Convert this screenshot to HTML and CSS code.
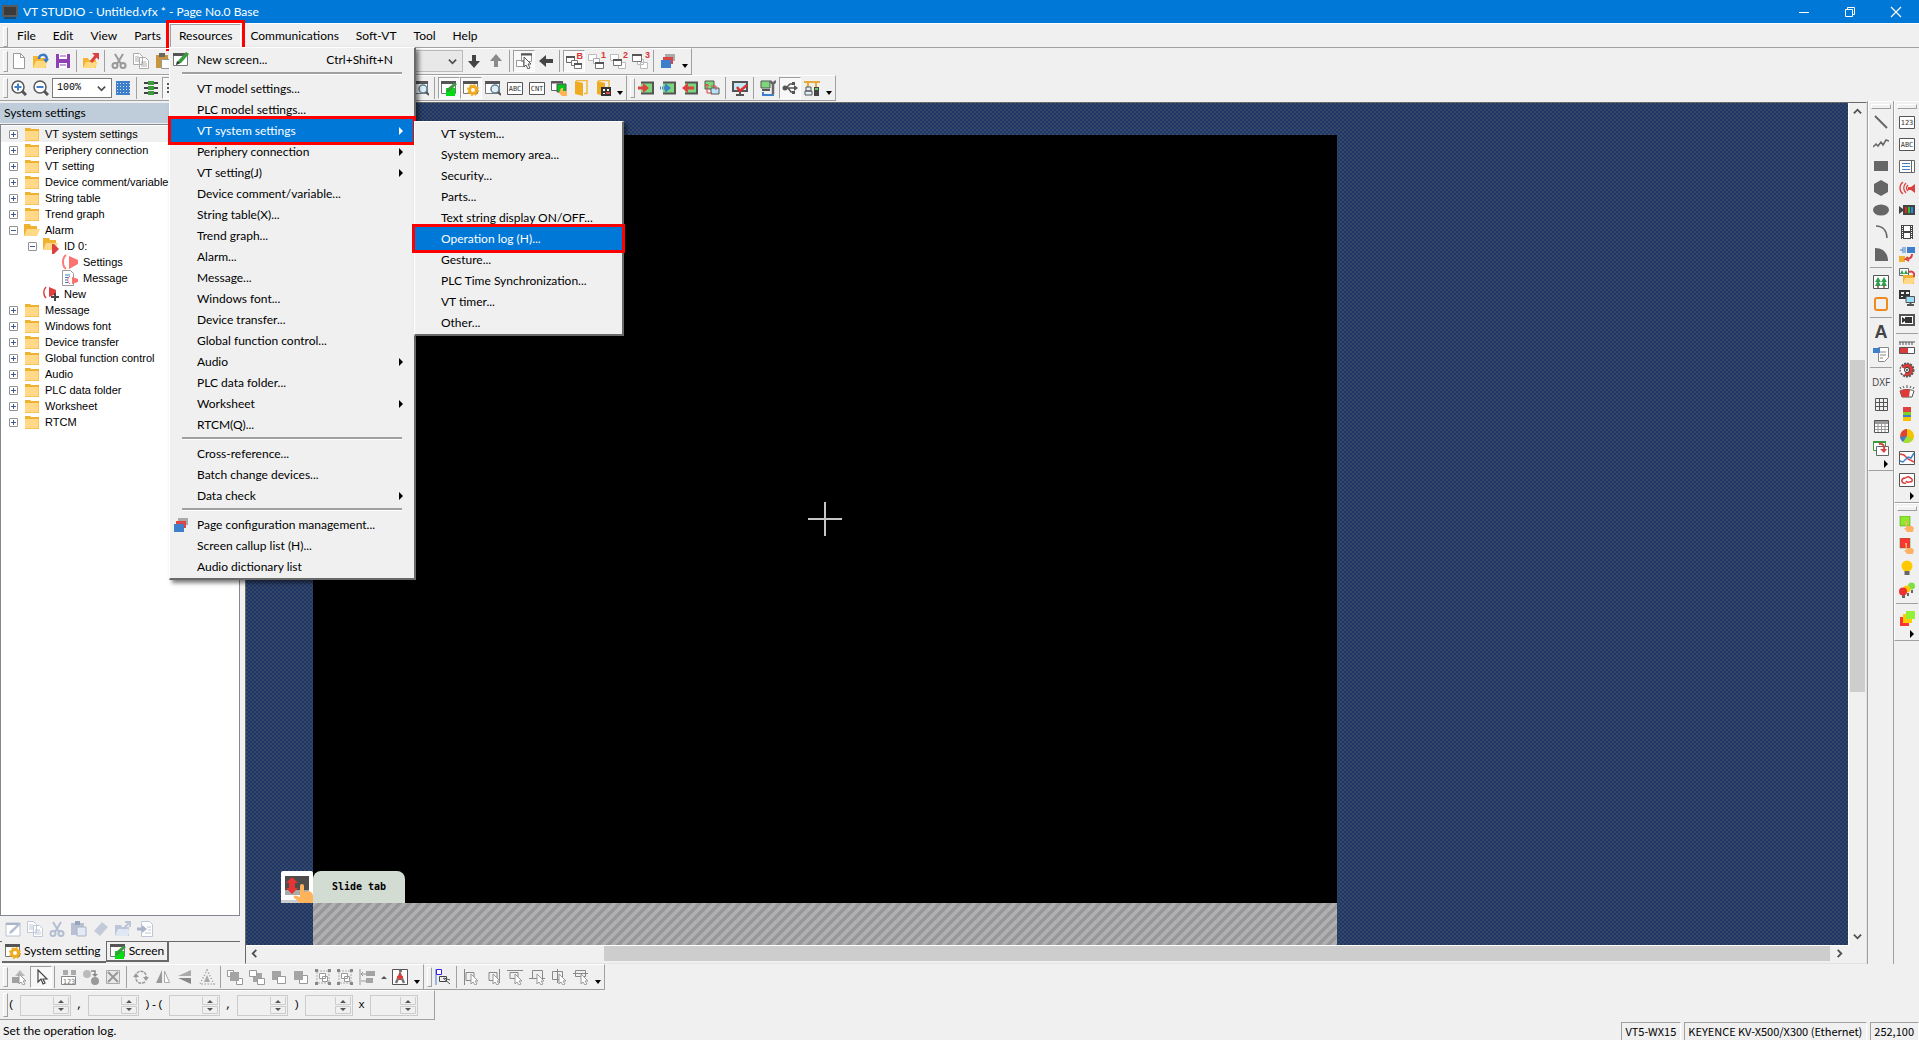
FILE: index.html
```html
<!DOCTYPE html>
<html lang="en">
<head>
<meta charset="utf-8">
<title>VT STUDIO - Untitled.vfx * - Page No.0 Base</title>
<link rel="stylesheet" href="styles.css">
</head>
<body>
<svg class="defs" aria-hidden="true">
  <symbol id="new" viewBox="0 0 16 16"><path d="M2.500.5h7l4 4v11h-11z" fill="#fff" stroke="#999"/><path d="M9.500.5v4h4" fill="none" stroke="#999"/></symbol>
  <symbol id="open" viewBox="0 0 16 16"><path d="M0 3h5l1 2h7v10H0z" fill="#f2b632"/><path d="M3 8h12l-3 7H0z" fill="#ffd980"/><path d="M6 6c0-5 7-6 8 0" fill="none" stroke="#3a7bc8" stroke-width="2.500"/><path d="M10 6h6l-3 4z" fill="#3a7bc8"/></symbol>
  <symbol id="save" viewBox="0 0 16 16"><path d="M1 1h14v14H1z" fill="#8e3fb5"/><path d="M4 1h8v5H4zM4 10h8v5H4z" fill="#fff"/><path d="M5 12h6M5 3h6" stroke="#8e3fb5"/></symbol>
  <symbol id="export" viewBox="0 0 16 16"><path d="M0 5h5l1 2h7v8H0z" fill="#f2b632"/><path d="M3 9h12l-3 6H0z" fill="#ffd980"/><path d="M8 9l5-6" stroke="#dd4040" stroke-width="3"/><path d="M9 0h7v7z" fill="#dd4040"/></symbol>
  <symbol id="cut" viewBox="0 0 16 16"><path d="M4 1l6 10M12 1L6 11" stroke="#999" stroke-width="2"/><circle cx="4" cy="12.500" r="2.500" fill="none" stroke="#999" stroke-width="2"/><circle cx="12" cy="12.500" r="2.500" fill="none" stroke="#999" stroke-width="2"/></symbol>
  <symbol id="copy" viewBox="0 0 16 16"><path d="M.5.5h6l3 3v8h-9zM6.500 4.500h6l3 3v8h-9z" fill="#fff" stroke="#aaa"/><path d="M2 4h4M2 6h4M2 8h4M8 9h5M8 11h6M8 13h6" stroke="#aaa"/></symbol>
  <symbol id="paste" viewBox="0 0 16 16"><path d="M1 2h12v13H1z" fill="#c8963c"/><path d="M4 0h6v4H4z" fill="#666"/><path d="M6.500 6.500h9v9h-9z" fill="#fff" stroke="#999"/></symbol>
  <symbol id="down" viewBox="0 0 16 16"><path d="M6 2h4v6h4l-6 7-6-7h4z" fill="#444"/></symbol>
  <symbol id="up" viewBox="0 0 16 16"><path d="M6 14h4V8h4L8 1 2 8h4z" fill="#8a8a8a"/></symbol>
  <symbol id="left" viewBox="0 0 16 16"><path d="M15 6v4H8v4L1 8l7-6v4z" fill="#444"/></symbol>
  <symbol id="pick" viewBox="0 0 16 16"><path d="M5.500.5h10v8h-10zM.5 7.500h7v6h-7z" fill="#fff" stroke="#999"/><path d="M5 1.500h11" stroke="#555" stroke-width="2"/><path d="M8 4v10l2-2 2 4 2-1-2-4h3z" fill="#fff" stroke="#555"/></symbol>
  <symbol id="win" viewBox="0 0 16 16"><path d="M.5 3.500h8v6h-8z" fill="#fff" stroke="#666"/><path d="M5.500 7.500h6v5h-6z" fill="#fff" stroke="#777"/><path d="M8.500 10.500h7v5h-7z" fill="#fff" stroke="#777"/><path d="M0 4h9M8 11h8" stroke="#555" stroke-width="2"/></symbol>
  <symbol id="win1" viewBox="0 0 16 16"><path d="M.5 1.500h8v6h-8z" fill="#fff" stroke="#bbb"/><path d="M5.500 5.500h6v5h-6z" fill="#fff" stroke="#aaa"/><path d="M7.500 9.500h8v6h-8z" fill="#fff" stroke="#777"/><path d="M7 10h9" stroke="#555" stroke-width="2"/></symbol>
  <symbol id="win2" viewBox="0 0 16 16"><path d="M.5 1.500h8v6h-8z" fill="#fff" stroke="#bbb"/><path d="M8.500 9.500h7v6h-7z" fill="#fff" stroke="#bbb"/><path d="M3.500 6.500h8v6h-8z" fill="#fff" stroke="#777"/><path d="M3 7h9" stroke="#555" stroke-width="2"/></symbol>
  <symbol id="win3" viewBox="0 0 16 16"><path d="M8.500 9.500h7v6h-7zM5.500 6.500h6v5h-6z" fill="#fff" stroke="#bbb"/><path d="M.5 1.500h9v7h-9z" fill="#fff" stroke="#777"/><path d="M0 2h10" stroke="#555" stroke-width="2"/></symbol>
  <symbol id="pages" viewBox="0 0 16 16"><path d="M5 1h10v7H5z" fill="#aaa"/><path d="M3 4h10v7H3z" fill="#dd4444"/><path d="M1 7h10v8H1z" fill="#3d7fcb"/></symbol>
  <symbol id="zin" viewBox="0 0 16 16"><path d="M11 11l4 4" stroke="#555" stroke-width="3"/><circle cx="7" cy="7" r="6" fill="#fff" stroke="#555" stroke-width="1.500"/><path d="M3.500 7h7M7 3.500v7" stroke="#3d7fcb" stroke-width="2"/></symbol>
  <symbol id="zout" viewBox="0 0 16 16"><path d="M11 11l4 4" stroke="#555" stroke-width="3"/><circle cx="7" cy="7" r="6" fill="#fff" stroke="#555" stroke-width="1.500"/><path d="M3.500 7h7" stroke="#3d7fcb" stroke-width="2"/></symbol>
  <symbol id="grid" viewBox="0 0 16 16"><path d="M1 1h14v14H1z" fill="#3d7fcb"/><path d="M2 3.500h13M2 6.500h13M2 9.500h13M2 12.500h13" stroke="#cfe2f7" stroke-dasharray="1 2"/></symbol>
  <symbol id="align" viewBox="0 0 16 16"><path d="M5 1h6v4H5zM5 6h6v4H5zM5 11h6v4H5z" fill="#3c9a3c"/><path d="M1 3h4M11 3h4M1 8h4M11 8h4M1 13h4M11 13h4" stroke="#444" stroke-width="2"/></symbol>
  <symbol id="dots" viewBox="0 0 16 16"><path d="M2 4h2M2 8h2M2 12h2" stroke="#555" stroke-width="2"/></symbol>
  <symbol id="frame" viewBox="0 0 16 16"><path d="M.5 1.500h14v12H.5z" fill="#fff" stroke="#777"/><path d="M0 2.500h15" stroke="#555" stroke-width="3"/></symbol>
  <symbol id="find" viewBox="0 0 16 16"><use href="#frame"/><circle cx="10" cy="9" r="4" fill="#dff0f7" stroke="#5f8096" stroke-width="1.500"/><path d="M13 12l3 3" stroke="#555" stroke-width="2"/></symbol>
  <symbol id="edit" viewBox="0 0 16 16"><use href="#frame"/><path d="M5 8h9v8H5z" fill="#00dd10"/><path d="M5 12l1-3 7-6 3 1-8 8z" fill="#3a9b3f"/></symbol>
  <symbol id="pencil" viewBox="0 0 16 16"><use href="#frame"/><path d="M3 13l2-4L13 0l3 2-8 9z" fill="#3a9b3f"/><path d="M3 13l1-4 3 2z" fill="#333"/></symbol>
  <symbol id="gear" viewBox="0 0 16 16"><use href="#frame"/><circle cx="10" cy="10" r="3.500" fill="#fff" stroke="#f0ac20" stroke-width="3"/><circle cx="10" cy="10" r="5.300" fill="none" stroke="#f0ac20" stroke-width="1.500" stroke-dasharray="2 2.160"/></symbol>
  <symbol id="box" viewBox="0 0 16 16"><path d="M.5 2.500h15v12H.5z" fill="#fff" stroke="#555"/></symbol>
  <symbol id="touch" viewBox="0 0 16 16"><path d="M.5 1.500h11v9H.5z" fill="#fff" stroke="#666"/><path d="M0 2.500h12" stroke="#555" stroke-width="2"/><path d="M6 4h9v8H6z" fill="#00c818" stroke="#555"/><path d="M10 8h2v3h4v5h-5l-3-3z" fill="#ffb256"/></symbol>
  <symbol id="book" viewBox="0 0 16 16"><path d="M2 1l8 2v13l-8-2z" fill="#f0ac20"/><path d="M3 .5h11v13h-3" fill="none" stroke="#f0b840" stroke-width="1.500"/></symbol>
  <symbol id="books" viewBox="0 0 16 16"><use href="#book"/><path d="M6 7h10v9H6z" fill="#333"/><path d="M8 9h2v2H8zM12 9h2v2h-2zM8 13h2v1H8z" fill="#fff"/><path d="M11 12h4v2h-4z" fill="#d44"/></symbol>
  <symbol id="card" viewBox="0 0 16 16"><path d="M3 2.500h12v11H3" fill="#7cd67c" stroke="#555" stroke-width="2"/></symbol>
  <symbol id="cin" viewBox="0 0 16 16"><use href="#card"/><path d="M0 8h7" stroke="#dd4040" stroke-width="3"/><path d="M5 3l6 5-6 5z" fill="#dd4040"/></symbol>
  <symbol id="cin2" viewBox="0 0 16 16"><use href="#card"/><path d="M0 8h7" stroke="#3d7fcb" stroke-width="3" stroke-dasharray="1 1"/><path d="M5 3l6 5-6 5z" fill="#3d7fcb"/></symbol>
  <symbol id="cout" viewBox="0 0 16 16"><use href="#card"/><path d="M4 8h8" stroke="#dd4040" stroke-width="3"/><path d="M6 3L0 8l6 5z" fill="#dd4040"/></symbol>
  <symbol id="swap" viewBox="0 0 16 16"><path d="M1 1h9v8H1z" fill="#7cd67c" stroke="#555"/><path d="M7 8h8v6H7z" fill="#b4e4fa" stroke="#555"/><path d="M3 4v9h5M1 6l2-2 2 2M7 6h5v4" fill="none" stroke="#dd4040"/></symbol>
  <symbol id="moncheck" viewBox="0 0 16 16"><path d="M1 2h14v9H1z" fill="#c3e8f8" stroke="#555" stroke-width="2"/><path d="M4 15h8M8 11v4" stroke="#555" stroke-width="2"/><path d="M5 7l3 4 7-6" fill="none" stroke="#dd3030" stroke-width="2.500"/></symbol>
  <symbol id="tools" viewBox="0 0 16 16"><path d="M1 1h9v7H1z" fill="#7cd67c" stroke="#555"/><path d="M2 10h8" stroke="#555" stroke-width="2"/><path d="M3 12v3h11" fill="none" stroke="#3d7fcb" stroke-width="2"/><path d="M10 1l3 3 3-3M13 4v10" fill="none" stroke="#666" stroke-width="2.500"/></symbol>
  <symbol id="usb" viewBox="0 0 16 16"><path d="M1 8h13M4 8l4-4h3M6 8l3 4h3" fill="none" stroke="#555" stroke-width="1.500"/><circle cx="3" cy="8" r="2.500" fill="#555"/><path d="M12 5l4 3-4 3zM10 2h3v3h-3zM10 11h3v3h-3z" fill="#555"/></symbol>
  <symbol id="net" viewBox="0 0 16 16"><path d="M0 2h16M4 2v5M12 2v5" stroke="#e6a93a" stroke-width="2"/><path d="M2 7h5v4H2zM1 11h7v4H1z" fill="#dff0f7" stroke="#555"/><path d="M10 7h5v9h-5z" fill="#444"/><path d="M11 8h3v2h-3z" fill="#6c6"/></symbol>
  <symbol id="drop" viewBox="0 0 8 16"><path d="M1 11h6l-3 4z" fill="#000"/></symbol>
  <symbol id="side" viewBox="0 0 8 8"><path d="M2 0v8l4-4z" fill="currentColor"/></symbol>
  <symbol id="folder" viewBox="0 0 16 16"><path d="M1 2h5l1 1h8v12H1z" fill="#f0b030"/><path d="M1 5h13.500v9.500H1z" fill="#ffd987"/></symbol>
  <symbol id="fopen" viewBox="0 0 16 16"><path d="M0 2h6l1 2h6v10H0z" fill="#f0b030"/><path d="M3 7h13l-3 7H0z" fill="#ffd987"/></symbol>
  <symbol id="fid" viewBox="0 0 16 16"><path d="M0 0h6l1 2h6v10H0z" fill="#f0b030"/><path d="M3 5h12l-3 7H0z" fill="#ffd987"/><path d="M9 6h2l5 5-5 5H9z" fill="#dd4040"/></symbol>
  <symbol id="alarm" viewBox="0 0 16 16"><path d="M4 1C0 4 0 12 4 15" fill="none" stroke="#fa7a7a" stroke-width="2"/><path d="M7 2l9 4v4l-9 5z" fill="#fa7272"/></symbol>
  <symbol id="amsg" viewBox="0 0 16 16"><path d="M.5.5h8l3 3v12H.5z" fill="#fff" stroke="#999"/><path d="M3 5h5M3 7.500h4M3 10h3M3 12.500h3" stroke="#3d7fcb"/><path d="M8 6c-3 2-3 6 0 8" fill="none" stroke="#fa7272"/><path d="M10 7l6 2v3l-6 2z" fill="#fa7272"/></symbol>
  <symbol id="anew" viewBox="0 0 16 16"><path d="M3 1C0 4 0 9 3 12" fill="none" stroke="#dd4040" stroke-width="1.500"/><path d="M6 1l7 3v4l-7 3z" fill="#dd4040"/><path d="M12 7v8M8 11h8" stroke="#444" stroke-width="2"/></symbol>
  <symbol id="slash" viewBox="0 0 16 16"><path d="M2 2l12 12" stroke="#666" stroke-width="2"/></symbol>
  <symbol id="poly" viewBox="0 0 16 16"><path d="M0 11l3-3 2 2 3-4 2 3 3-5 3 1" fill="none" stroke="#666" stroke-width="1.500"/></symbol>
  <symbol id="rect" viewBox="0 0 16 16"><path d="M1 3h14v10H1z" fill="#666"/></symbol>
  <symbol id="hex" viewBox="0 0 16 16"><path d="M8 0l7 4v8l-7 4-7-4V4z" fill="#666"/></symbol>
  <symbol id="ell" viewBox="0 0 16 16"><ellipse cx="8" cy="8" rx="8" ry="5.500" fill="#666"/></symbol>
  <symbol id="arc" viewBox="0 0 16 16"><path d="M3 2c7 0 11 5 11 12" fill="none" stroke="#666" stroke-width="1.500"/></symbol>
  <symbol id="pie4" viewBox="0 0 16 16"><path d="M2 2c8 0 13 5 13 13H2z" fill="#666"/></symbol>
  <symbol id="img" viewBox="0 0 16 16"><path d="M.5 1.500h15v13H.5z" fill="#fff" stroke="#555"/><path d="M5 3l3 5H2zM11 3l3 5H8zM5 6l3 6H2zM11 6l3 6H8z" fill="#2f9e4f"/><path d="M5 11v3M11 11v3" stroke="#855" stroke-width="1.500"/></symbol>
  <symbol id="ring" viewBox="0 0 16 16"><rect x="2" y="2" width="12" height="12" rx="2" fill="none" stroke="#f08a1c" stroke-width="2"/></symbol>
  <symbol id="note" viewBox="0 0 16 16"><path d="M5.500 1.500h10v10l-4 4h-6z" fill="#fff" stroke="#888"/><path d="M0 2h7v5H0z" fill="#3d7fcb"/><path d="M7 6h6M7 9h6M7 12h3" stroke="#888"/></symbol>
  <symbol id="tbl" viewBox="0 0 16 16"><path d="M2.500 2.500h12v12h-12zM2.500 6.500h12M2.500 10.500h12M6.500 2.500v12M10.500 2.500v12" fill="none" stroke="#555"/></symbol>
  <symbol id="tbl2" viewBox="0 0 16 16"><path d="M1.500 2.500h14v12h-14z" fill="#fff" stroke="#555"/><path d="M2 3h13v2H2z" fill="#999"/><path d="M2 5.500h13M2 8.500h13M2 11.500h13M5 3v11M8.500 3v11M12 3v11" stroke="#999"/></symbol>
  <symbol id="ret" viewBox="0 0 16 16"><path d="M.5 1.500h12v9H.5z" fill="#fff" stroke="#3c9a3c"/><path d="M0 2h13" stroke="#3c9a3c" stroke-width="2"/><path d="M3.500 6.500h12v9h-12z" fill="#fff" stroke="#666"/><path d="M6 4c4-1 6 2 5 6" fill="none" stroke="#dd4040" stroke-width="2"/><path d="M7 9h7l-3 4z" fill="#dd4040"/></symbol>
  <symbol id="list" viewBox="0 0 16 16"><path d="M.5 2.500h15v12H.5zM12.500 2.500v12" fill="#fff" stroke="#666"/><path d="M3 5.500h8M3 8.500h8M3 11.500h8" stroke="#3d7fcb"/></symbol>
  <symbol id="horn" viewBox="0 0 16 16"><path d="M4 2c-4 3-4 9 0 12M7 3c-3 3-3 7 0 10M9 5c-2 2-2 4 0 6" fill="none" stroke="#dd4040" stroke-width="1.300"/><path d="M9 7h3l4-3v9l-4-3H9z" fill="#dd4040"/></symbol>
  <symbol id="cam" viewBox="0 0 16 16"><path d="M0 4l4 3V3h12v10H4V9l-4 3z" fill="#444"/><path d="M6 5h2v6H6z" fill="#e22"/><path d="M9 5h2v6H9z" fill="#2c2"/><path d="M12 5h2v6h-2z" fill="#28e"/></symbol>
  <symbol id="film" viewBox="0 0 16 16"><path d="M2 1h12v14H2z" fill="#444"/><path d="M5 2h6v5H5zM5 9h6v5H5z" fill="#fff"/><path d="M3.500 2v13M12.500 2v13" stroke="#fff" stroke-dasharray="1 1"/></symbol>
  <symbol id="link" viewBox="0 0 16 16"><path d="M8 1h8v6H8z" fill="#3d7fcb"/><path d="M1 4h3M4 1v6M6 1v6" stroke="#3d7fcb"/><path d="M0 10h6v6H0z" fill="#f0b030"/><path d="M13 8c0 4-3 5-6 5l2-2M7 13l3 2" fill="none" stroke="#dd4040" stroke-width="2"/></symbol>
  <symbol id="imgf" viewBox="0 0 16 16"><path d="M.5.5h9v7h-9z" fill="#fff" stroke="#666"/><path d="M3 2l2 4H1zM7 2l2 4H5z" fill="#2f9e4f"/><path d="M4 7h11v9H4z" fill="#f0b030"/><path d="M6 10h10l-2 6H4z" fill="#ffd987"/><path d="M10 4c4-2 6 2 5 5" fill="none" stroke="#dd4040" stroke-width="2"/></symbol>
  <symbol id="vnc" viewBox="0 0 16 16"><path d="M0 0h11v9H0z" fill="#333"/><path d="M2 2h3v2H2zM7 2h3v2H7zM2 6h2v1H2z" fill="#eee"/><path d="M7 6.500h8.500v6H7z" fill="#9bdcf7" stroke="#555"/><path d="M8 15h7M11.500 12v3" stroke="#555" stroke-width="2"/></symbol>
  <symbol id="camm" viewBox="0 0 16 16"><path d="M0 2h16v12H0z" fill="#555"/><path d="M2 4h12v8H2z" fill="#fff"/><path d="M3 5l3 2V5h7v6H6V9l-3 2z" fill="#333"/></symbol>
  <symbol id="meter" viewBox="0 0 16 16"><path d="M0 2h16M1 2v3M4 2v3M7 2v3M10 2v3M13 2v3" stroke="#555"/><path d="M.5 7.500h15v6H.5z" fill="#fff" stroke="#555"/><path d="M1 8h8v5H1z" fill="#dd3a3a"/></symbol>
  <symbol id="dial" viewBox="0 0 16 16"><circle cx="8" cy="8" r="6.500" fill="#dd3a3a" stroke="#555" stroke-width="2" stroke-dasharray="2 1"/><path d="M8 8L2 5l-.5 5L5 13z" fill="#fff"/><circle cx="8" cy="8" r="2.500" fill="#fff" stroke="#333"/><circle cx="8" cy="8" r="1" fill="#333"/></symbol>
  <symbol id="fan" viewBox="0 0 16 16"><path d="M1 7c4-2 10-2 14 0l-2 6H3z" fill="#fff" stroke="#555"/><path d="M1 7c4-2 7-2 10-1l-1 7H3z" fill="#dd3a3a"/><path d="M1 3l1 2M4 2l1 2M8 1v3M12 2l-1 2M15 3l-1 2" stroke="#555"/></symbol>
  <symbol id="bar" viewBox="0 0 16 16"><path d="M4 1h8v5H4z" fill="#e04040"/><path d="M4 6h8v3H4z" fill="#7ed321"/><path d="M4 9h8v2H4z" fill="#3d7fcb"/><path d="M4 11h8v4H4z" fill="#f5c400"/></symbol>
  <symbol id="pie" viewBox="0 0 16 16"><circle cx="8" cy="8" r="7" fill="#f5c400"/><path d="M8 8V1a7 7 0 0 0-6 10z" fill="#e04040"/><path d="M8 8l6 3a7 7 0 0 1-10 3z" fill="#a0e030"/><path d="M8 8l-4 6a7 7 0 0 1-3-5z" fill="#3d7fcb"/></symbol>
  <symbol id="trend" viewBox="0 0 16 16"><path d="M.5 1.500h15v13H.5z" fill="#fff" stroke="#555"/><path d="M1 4l4 1 4 4 6 3" fill="none" stroke="#dd4040" stroke-width="1.500"/><path d="M1 11l3 1 5-5 3 1 3-5" fill="none" stroke="#3d7fcb" stroke-width="1.500"/></symbol>
  <symbol id="xy" viewBox="0 0 16 16"><path d="M.5 1.500h15v13H.5z" fill="#fff" stroke="#555"/><path d="M7 11c-4 1-6-3-2-5 1 1 3-2 5-1s5 3 2 5c-2-1-3 2-5-1" fill="none" stroke="#dd4040" stroke-width="1.500"/></symbol>
  <symbol id="sw" viewBox="0 0 16 16"><path d="M1 0h10v10H1z" fill="currentColor" stroke="#4a8a20" stroke-width=".5"/><path d="M6 5h2v5h5l2 2-1 4H8l-3-4h2z" fill="#ffb266"/></symbol>
  <symbol id="bulb" viewBox="0 0 16 16"><circle cx="8" cy="6" r="5.500" fill="#ffc800"/><path d="M5.500 11h5v4h-5z" fill="#666"/></symbol>
  <symbol id="bulbs" viewBox="0 0 16 16"><path d="M3 13h3v3H3zM8 11h2v3H8zM12 8h2v3h-2z" fill="#666"/><circle cx="12.500" cy="4" r="3.500" fill="#7de04a"/><circle cx="8" cy="7" r="3.500" fill="#ffc800"/><circle cx="4" cy="9.500" r="4" fill="#ee3030"/></symbol>
  <symbol id="stack" viewBox="0 0 16 16"><path d="M1 7h9v9H1z" fill="#f33"/><path d="M4 4h9v9H4z" fill="#fc0"/><path d="M7 1h9v8H7z" fill="#93f035"/></symbol>
  <symbol id="gsel" viewBox="0 0 16 16"><path d="M9 1l5 6H4z" fill="#bbb"/><path d="M1 8h7v6H1z" fill="#a0a0a0"/><path d="M8 5v10l2-2 2 3 2-1-2-3h3z" fill="#fff" stroke="#999"/></symbol>
  <symbol id="arrow" viewBox="0 0 16 16"><path d="M5 1v12l3-3 2 5 2-1-2-4h4z" fill="#fff" stroke="#444" stroke-width="1.200"/></symbol>
  <symbol id="g123" viewBox="0 0 16 16"><path d="M2 1h5v5H2zM10 1h5v5h-5z" fill="#aaa"/><path d="M.5 7.500h14v8H.5z" fill="#fff" stroke="#888"/></symbol>
  <symbol id="gmove" viewBox="0 0 16 16"><circle cx="4" cy="5" r="4" fill="#bbb"/><circle cx="12" cy="12" r="4" fill="#999"/><path d="M8 2h4v5" fill="none" stroke="#888" stroke-width="1.500"/><path d="M9 5h6l-3 3z" fill="#888"/></symbol>
  <symbol id="gx" viewBox="0 0 16 16"><path d="M1.500 1.500h13v13h-13z" fill="#e8e8e8" stroke="#aaa"/><path d="M3 3l10 10M13 3L3 13" stroke="#999" stroke-width="2"/></symbol>
  <symbol id="grot" viewBox="0 0 16 16"><path d="M4 4c4-4 10-1 9 5M12 13c-5 3-10 0-9-6" fill="none" stroke="#999" stroke-width="1.500" stroke-dasharray="3 1"/><path d="M10 8h6l-3 4zM0 8h6L3 4z" fill="#999"/></symbol>
  <symbol id="gfh" viewBox="0 0 16 16"><path d="M7 1v13H1z" fill="#999"/><path d="M9.500 2v11.500h5z" fill="#fff" stroke="#aaa"/></symbol>
  <symbol id="gfv" viewBox="0 0 16 16"><path d="M14 7H1l13-6z" fill="#aaa"/><path d="M14 9H1l13 6z" fill="#888"/></symbol>
  <symbol id="gtri" viewBox="0 0 16 16"><path d="M8 1l7 14H1z" fill="none" stroke="#999" stroke-width="1.500" stroke-dasharray="1 2"/><path d="M8 6l3 7H5z" fill="#aaa"/></symbol>
  <symbol id="z1" viewBox="0 0 16 16"><path d="M.5 1.500h6v6h-6zM9.500 9.500h6v6h-6z" fill="#fff" stroke="#999"/><path d="M3 3h9v9H3z" fill="#a4a4a4"/></symbol>
  <symbol id="z2" viewBox="0 0 16 16"><path d="M4 4h9v9H4z" fill="#a4a4a4"/><path d="M.5 1.500h7v6h-7zM8.500 9.500h7v6h-7z" fill="#fff" stroke="#999"/></symbol>
  <symbol id="z3" viewBox="0 0 16 16"><path d="M1 2h9v9H1z" fill="#a4a4a4"/><path d="M6.500 7.500h8v7h-8z" fill="#fff" stroke="#999"/></symbol>
  <symbol id="z4" viewBox="0 0 16 16"><path d="M6.500 6.500h8v8h-8z" fill="#fff" stroke="#999"/><path d="M1 2h9v9H1z" fill="#a4a4a4"/></symbol>
  <symbol id="grp" viewBox="0 0 16 16"><path d="M2 2h12v12H2z" fill="none" stroke="#aaa" stroke-dasharray="2 1"/><path d="M0 0h3v3H0zM13 0h3v3h-3zM0 13h3v3H0zM13 13h3v3h-3z" fill="#888"/><path d="M4.500 4.500h6v5h-6zM7.500 7.500h5v5h-5z" fill="#fff" stroke="#999"/></symbol>
  <symbol id="dist" viewBox="0 0 16 16"><path d="M1 0v16M2 5h5M2 12h5M4 3L2 5l2 2" fill="none" stroke="#999"/><path d="M7 2h9v5H7zM7 9h7v5H7z" fill="#a4a4a4"/></symbol>
  <symbol id="snap" viewBox="0 0 16 16"><path d="M.5.5h15v15H.5z" fill="#fff" stroke="#555"/><path d="M4 14l4-9 4 9M7 2h3" fill="none" stroke="#777" stroke-width="2.500"/><path d="M8 4v7M5 8h6" stroke="#e33" stroke-width="2"/></symbol>
  <symbol id="anc" viewBox="0 0 16 16"><path d="M1 0v16" stroke="#3d7fcb"/><path d="M1.500.5h5v5h-5z" fill="#fff" stroke="#3a1fe0"/><path d="M4.500 7.500h7v5h-7z" fill="none" stroke="#444"/><path d="M8 9l7 6M9 9l6 2" stroke="#555"/></symbol>
  <symbol id="ptr" viewBox="0 0 16 16"><path d="M8 5v10l2-2 2 3 2-1-2-3h3z" fill="#fff" stroke="#999"/></symbol>
  <symbol id="spn" viewBox="0 0 16 17"><path d="M.5 0v7.500h15V0M.5 9.500h15v7H.5z" fill="none" stroke="#ccc"/><path d="M5 6h6L8 3zM5 11h6l-3 3z" fill="#555"/></symbol>
  <symbol id="eraser" viewBox="0 0 16 16"><path d="M9 1l6 5-8 9-6-5z" fill="#c3cad9"/></symbol>
  <symbol id="up4" viewBox="0 0 8 8"><path d="M1 6l3-3 3 3z" fill="#555"/></symbol>
  <symbol id="chev" viewBox="0 0 10 10"><path d="M1 3l4 4 4-4" fill="none" stroke="currentColor" stroke-width="2"/></symbol>
</svg>

<header class="title">
  <svg class="app" viewBox="0 0 16 14"><path d="M0 0h16v12H0z" fill="#5a5a5a"/><path d="M2 2h12v8H2z" fill="#3a3a3a"/><path d="M2 13h12" stroke="#222"/></svg>
  <h1>VT STUDIO - Untitled.vfx * - Page No.0 Base</h1>
  <div class="winbtns">
    <button aria-label="Minimize"><svg viewBox="0 0 12 12"><path d="M1 6.500h10" stroke="#fff"/></svg></button>
    <button aria-label="Restore"><svg viewBox="0 0 12 12"><path d="M1.500 3.500h7v7h-7zM3.500 3V1.500h7v7H9" fill="none" stroke="#fff"/></svg></button>
    <button aria-label="Close"><svg viewBox="0 0 12 12"><path d="M1 1l10 10M11 1L1 11" stroke="#fff" stroke-width="1.200"/></svg></button>
  </div>
</header>

<nav class="menubar">
  <button>File</button><button>Edit</button><button>View</button><button>Parts</button>
  <div class="menuhost">
    <button class="open marked">Resources</button>
    <ul class="popup main">
      <li><button><svg class="i"><use href="#pencil"/></svg>New screen...<kbd>Ctrl+Shift+N</kbd></button></li>
      <li class="rule"></li>
      <li><button>VT model settings...</button></li>
      <li><button>PLC model settings...</button></li>
      <li class="active marked"><button>VT system settings<svg class="more"><use href="#side"/></svg></button>
        <ul class="popup sub">
          <li><button>VT system...</button></li>
          <li><button>System memory area...</button></li>
          <li><button>Security...</button></li>
          <li><button>Parts...</button></li>
          <li><button>Text string display ON/OFF...</button></li>
          <li class="active marked"><button>Operation log (H)...</button></li>
          <li><button>Gesture...</button></li>
          <li><button>PLC Time Synchronization...</button></li>
          <li><button>VT timer...</button></li>
          <li><button>Other...</button></li>
        </ul>
      </li>
      <li><button>Periphery connection<svg class="more"><use href="#side"/></svg></button></li>
      <li><button>VT setting(J)<svg class="more"><use href="#side"/></svg></button></li>
      <li><button>Device comment/variable...</button></li>
      <li><button>String table(X)...</button></li>
      <li><button>Trend graph...</button></li>
      <li><button>Alarm...</button></li>
      <li><button>Message...</button></li>
      <li><button>Windows font...</button></li>
      <li><button>Device transfer...</button></li>
      <li><button>Global function control...</button></li>
      <li><button>Audio<svg class="more"><use href="#side"/></svg></button></li>
      <li><button>PLC data folder...</button></li>
      <li><button>Worksheet<svg class="more"><use href="#side"/></svg></button></li>
      <li><button>RTCM(Q)...</button></li>
      <li class="rule"></li>
      <li><button>Cross-reference...</button></li>
      <li><button>Batch change devices...</button></li>
      <li><button>Data check<svg class="more"><use href="#side"/></svg></button></li>
      <li class="rule"></li>
      <li><button><svg class="i"><use href="#pages"/></svg>Page configuration management...</button></li>
      <li><button>Screen callup list (H)...</button></li>
      <li><button>Audio dictionary list</button></li>
    </ul>
  </div>
  <button>Communications</button><button>Soft-VT</button><button>Tool</button><button>Help</button>
</nav>

<div class="bars">
  <div class="bar first">
    <button class="t" aria-label="New"><svg class="i"><use href="#new"/></svg></button>
    <button class="t" aria-label="Open"><svg class="i"><use href="#open"/></svg></button>
    <button class="t" aria-label="Save"><svg class="i"><use href="#save"/></svg></button>
    <i class="sep"></i>
    <button class="t" aria-label="Export"><svg class="i"><use href="#export"/></svg></button>
    <i class="sep"></i>
    <button class="t" aria-label="Cut"><svg class="i"><use href="#cut"/></svg></button>
    <button class="t" aria-label="Copy"><svg class="i"><use href="#copy"/></svg></button>
    <button class="t" aria-label="Paste"><svg class="i"><use href="#paste"/></svg></button>
    <span class="combo page"><select aria-label="Screen" disabled><option></option></select><svg class="chev"><use href="#chev"/></svg></span>
    <button class="t" aria-label="Next"><svg class="i"><use href="#down"/></svg></button>
    <button class="t" aria-label="Previous"><svg class="i"><use href="#up"/></svg></button>
    <i class="sep"></i>
    <button class="t on" aria-label="Pick"><svg class="i"><use href="#pick"/></svg></button>
    <button class="t" aria-label="Back"><svg class="i"><use href="#left"/></svg></button>
    <i class="sep"></i>
    <button class="t on"><svg class="i"><use href="#win"/></svg><b class="tag">B</b></button>
    <button class="t"><svg class="i"><use href="#win1"/></svg><b class="tag">1</b></button>
    <button class="t"><svg class="i"><use href="#win2"/></svg><b class="tag">2</b></button>
    <button class="t"><svg class="i"><use href="#win3"/></svg><b class="tag">3</b></button>
    <i class="sep"></i>
    <button class="t" aria-label="Pages"><svg class="i"><use href="#pages"/></svg></button>
    <button class="d" aria-label="More"><svg><use href="#drop"/></svg></button>
  </div>
</div>
<div class="bars">
  <div class="bar second">
    <button class="t" aria-label="Zoom in"><svg class="i"><use href="#zin"/></svg></button>
    <button class="t" aria-label="Zoom out"><svg class="i"><use href="#zout"/></svg></button>
    <span class="combo zoom"><select aria-label="Zoom"><option>100%</option></select><svg class="chev"><use href="#chev"/></svg></span>
    <button class="t" aria-label="Grid"><svg class="i"><use href="#grid"/></svg></button>
    <i class="sep"></i>
    <button class="t" aria-label="Align"><svg class="i"><use href="#align"/></svg></button>
    <button class="t on" aria-label="Dots"><svg class="i"><use href="#dots"/></svg></button>
    <span class="gap"></span>
    <button class="t" aria-label="Search"><svg class="i"><use href="#find"/></svg></button>
    <i class="sep"></i>
    <button class="t on" aria-label="Edit"><svg class="i"><use href="#edit"/></svg></button>
    <button class="t on" aria-label="Settings"><svg class="i"><use href="#gear"/></svg></button>
    <button class="t" aria-label="Find"><svg class="i"><use href="#find"/></svg></button>
    <button class="t"><svg class="i"><use href="#box"/></svg><b class="abc">ABC</b></button>
    <button class="t"><svg class="i"><use href="#box"/></svg><b class="abc">CNT</b></button>
    <button class="t" aria-label="Touch"><svg class="i"><use href="#touch"/></svg></button>
    <button class="t" aria-label="Library"><svg class="i"><use href="#book"/></svg></button>
    <button class="t" aria-label="Parts library"><svg class="i"><use href="#books"/></svg></button>
    <button class="d" aria-label="More"><svg><use href="#drop"/></svg></button>
  </div>
  <div class="bar">
    <button class="t" aria-label="Send"><svg class="i"><use href="#cin"/></svg></button>
    <button class="t" aria-label="Send partly"><svg class="i"><use href="#cin2"/></svg></button>
    <button class="t" aria-label="Receive"><svg class="i"><use href="#cout"/></svg></button>
    <button class="t" aria-label="Compare"><svg class="i"><use href="#swap"/></svg></button>
    <i class="sep"></i>
    <button class="t" aria-label="Verify"><svg class="i"><use href="#moncheck"/></svg></button>
    <i class="sep"></i>
    <button class="t" aria-label="Tools"><svg class="i"><use href="#tools"/></svg></button>
    <button class="t on" aria-label="USB"><svg class="i"><use href="#usb"/></svg></button>
    <button class="t" aria-label="Network"><svg class="i"><use href="#net"/></svg></button>
    <button class="d" aria-label="More"><svg><use href="#drop"/></svg></button>
  </div>
</div>

<main class="work">
  <aside class="side">
    <h2>System settings</h2>
    <ul class="tree">
      <li class="sel"><i class="pm plus"></i><svg class="i"><use href="#folder"/></svg><span>VT system settings</span></li>
      <li><i class="pm plus"></i><svg class="i"><use href="#folder"/></svg><span>Periphery connection</span></li>
      <li><i class="pm plus"></i><svg class="i"><use href="#folder"/></svg><span>VT setting</span></li>
      <li><i class="pm plus"></i><svg class="i"><use href="#folder"/></svg><span>Device comment/variable</span></li>
      <li><i class="pm plus"></i><svg class="i"><use href="#folder"/></svg><span>String table</span></li>
      <li><i class="pm plus"></i><svg class="i"><use href="#folder"/></svg><span>Trend graph</span></li>
      <li><i class="pm"></i><svg class="i"><use href="#fopen"/></svg><span>Alarm</span></li>
      <li class="l2"><i class="pm"></i><svg class="i"><use href="#fid"/></svg><span>ID 0:</span></li>
      <li class="l3"><svg class="i"><use href="#alarm"/></svg><span>Settings</span></li>
      <li class="l3"><svg class="i"><use href="#amsg"/></svg><span>Message</span></li>
      <li class="l2b"><svg class="i"><use href="#anew"/></svg><span>New</span></li>
      <li><i class="pm plus"></i><svg class="i"><use href="#folder"/></svg><span>Message</span></li>
      <li><i class="pm plus"></i><svg class="i"><use href="#folder"/></svg><span>Windows font</span></li>
      <li><i class="pm plus"></i><svg class="i"><use href="#folder"/></svg><span>Device transfer</span></li>
      <li><i class="pm plus"></i><svg class="i"><use href="#folder"/></svg><span>Global function control</span></li>
      <li><i class="pm plus"></i><svg class="i"><use href="#folder"/></svg><span>Audio</span></li>
      <li><i class="pm plus"></i><svg class="i"><use href="#folder"/></svg><span>PLC data folder</span></li>
      <li><i class="pm plus"></i><svg class="i"><use href="#folder"/></svg><span>Worksheet</span></li>
      <li><i class="pm plus"></i><svg class="i"><use href="#folder"/></svg><span>RTCM</span></li>
    </ul>
    <div class="treebar">
      <button class="t" aria-label="Edit" disabled><svg class="i" viewBox="0 0 16 16"><path d="M1 2h14v13H1z" fill="#fff" stroke="#b9c2d4"/><path d="M1 2h14v2H1z" fill="#aab4c8"/><path d="M4 13l1-3 9-8 1 2-8 8z" fill="#b4bed0"/></svg></button>
      <button class="t" aria-label="Copy" disabled><svg class="i" viewBox="0 0 16 16"><path d="M.5.5h6l3 3v8h-9zM6.500 4.500h6l3 3v8h-9z" fill="#fff" stroke="#c0c8d8"/><path d="M2 4h4M2 6h4M2 8h4M8 9h5M8 11h6M8 13h6" stroke="#c0c8d8"/></svg></button>
      <button class="t" aria-label="Cut" disabled><svg class="i" viewBox="0 0 16 16"><path d="M4 1l6 10M12 1L6 11" stroke="#b4bed0" stroke-width="2"/><circle cx="4" cy="12.500" r="2.500" fill="none" stroke="#b4bed0" stroke-width="2"/><circle cx="12" cy="12.500" r="2.500" fill="none" stroke="#b4bed0" stroke-width="2"/></svg></button>
      <button class="t" aria-label="Paste" disabled><svg class="i" viewBox="0 0 16 16"><path d="M0 2h13v12H0z" fill="#b8c1d2"/><path d="M4 0h5v4H4z" fill="#98a4ba"/><path d="M6 6h9v9H6z" fill="#e3e9f5" stroke="#aab5c9"/></svg></button>
      <button class="t" aria-label="Delete" disabled><svg class="i"><use href="#eraser"/></svg></button>
      <button class="t" aria-label="Export" disabled><svg class="i" viewBox="0 0 16 16"><path d="M0 4h6l1 2h7v9H0z" fill="#bcc6d8"/><path d="M3 8h12l-2 7H0z" fill="#dfe6f4"/><path d="M8 8l6-6M10 1h5v5" fill="none" stroke="#bcc6d8" stroke-width="2"/></svg></button>
      <button class="t" aria-label="Import" disabled><svg class="i" viewBox="0 0 16 16"><path d="M4.500.5h8l3 3v12h-11z" fill="#fff" stroke="#bcc6d8"/><path d="M0 8h6" stroke="#aab5c9" stroke-width="3"/><path d="M5 4l5 4-5 4z" fill="#aab5c9"/><path d="M10 6h4M11 9h3M8 12h6" stroke="#bcc6d8"/></svg></button>
    </div>
    <div class="tabs">
      <button class="cur"><svg class="i"><use href="#gear"/></svg>System setting</button>
      <button><svg class="i"><use href="#edit"/></svg>Screen</button>
    </div>
  </aside>

  <section class="canvas">
    <div class="view">
      <div class="screen">
        <svg class="cross" viewBox="0 0 34 34"><path d="M17 0v34M0 17h34" stroke="#c4c7c6" stroke-width="2"/></svg>
        <div class="slide">Slide tab</div>
        <svg class="hand" viewBox="0 0 32 32"><rect width="32" height="32" rx="2" fill="#fff"/><path d="M0 29h32v3H0z" fill="#ccc"/><path d="M4 5h24v14H4z" fill="#4d4d4d"/><path d="M4 19h24v5H4z" fill="#aaa"/><path d="M11 6l6 6h-3v5h3l-6 6-6-6h3v-5H5z" fill="#e53535"/><path d="M19 15a2 2 0 0 1 4 0v6l5-1c3 1 4 3 4 5v7H19c-2-2-4-4-6-5-1-3 1-3 3-2l3 1z" fill="#ffb35c"/></svg>
      </div>
      <div class="hatch"></div>
    </div>
    <div class="vs"><svg class="chev flip"><use href="#chev"/></svg><span class="thumb"></span><svg class="chev"><use href="#chev"/></svg></div>
    <div class="hs"><svg class="chev lt"><use href="#chev"/></svg><span class="thumb"></span><svg class="chev rt"><use href="#chev"/></svg></div>
  </section>

  <div class="rail a">
    <div class="vbar">
      <button class="t" aria-label="Line"><svg class="i"><use href="#slash"/></svg></button>
      <button class="t" aria-label="Polyline"><svg class="i"><use href="#poly"/></svg></button>
      <button class="t" aria-label="Rectangle"><svg class="i"><use href="#rect"/></svg></button>
      <button class="t" aria-label="Polygon"><svg class="i"><use href="#hex"/></svg></button>
      <button class="t" aria-label="Ellipse"><svg class="i"><use href="#ell"/></svg></button>
      <button class="t" aria-label="Arc"><svg class="i"><use href="#arc"/></svg></button>
      <button class="t" aria-label="Sector"><svg class="i"><use href="#pie4"/></svg></button>
      <i class="sep"></i>
      <button class="t" aria-label="Image"><svg class="i"><use href="#img"/></svg></button>
      <button class="t" aria-label="Frame"><svg class="i"><use href="#ring"/></svg></button>
      <i class="sep"></i>
      <button class="t biga">A</button>
      <button class="t" aria-label="Note"><svg class="i"><use href="#note"/></svg></button>
      <i class="sep"></i>
      <button class="t dxf">DXF</button>
      <button class="t" aria-label="Table"><svg class="i"><use href="#tbl"/></svg></button>
      <button class="t" aria-label="Grid table"><svg class="i"><use href="#tbl2"/></svg></button>
      <button class="t" aria-label="Page call"><svg class="i"><use href="#ret"/></svg></button>
      <button class="d" aria-label="More"><svg><use href="#side"/></svg></button>
    </div>
  </div>
  <div class="rail b">
    <div class="vbar">
      <button class="t"><svg class="i"><use href="#box"/></svg><b class="abc">123</b></button>
      <button class="t"><svg class="i"><use href="#box"/></svg><b class="abc">ABC</b></button>
      <button class="t" aria-label="List"><svg class="i"><use href="#list"/></svg></button>
      <button class="t" aria-label="Alarm"><svg class="i"><use href="#horn"/></svg></button>
      <button class="t" aria-label="Camera"><svg class="i"><use href="#cam"/></svg></button>
      <button class="t" aria-label="Movie"><svg class="i"><use href="#film"/></svg></button>
      <button class="t" aria-label="Circuit"><svg class="i"><use href="#link"/></svg></button>
      <button class="t" aria-label="Image folder"><svg class="i"><use href="#imgf"/></svg></button>
      <button class="t" aria-label="Remote"><svg class="i"><use href="#vnc"/></svg></button>
      <button class="t" aria-label="Camera view"><svg class="i"><use href="#camm"/></svg></button>
      <i class="sep"></i>
      <button class="t" aria-label="Bar meter"><svg class="i"><use href="#meter"/></svg></button>
      <button class="t" aria-label="Dial"><svg class="i"><use href="#dial"/></svg></button>
      <button class="t" aria-label="Panel meter"><svg class="i"><use href="#fan"/></svg></button>
      <button class="t" aria-label="Bar graph"><svg class="i"><use href="#bar"/></svg></button>
      <button class="t" aria-label="Pie graph"><svg class="i"><use href="#pie"/></svg></button>
      <button class="t" aria-label="Trend"><svg class="i"><use href="#trend"/></svg></button>
      <button class="t" aria-label="XY graph"><svg class="i"><use href="#xy"/></svg></button>
      <button class="d" aria-label="More"><svg><use href="#side"/></svg></button>
    </div>
    <div class="vbar">
      <button class="t green" aria-label="Switch"><svg class="i"><use href="#sw"/></svg></button>
      <button class="t red" aria-label="Multi switch"><svg class="i"><use href="#sw"/></svg></button>
      <button class="t" aria-label="Lamp"><svg class="i"><use href="#bulb"/></svg></button>
      <button class="t" aria-label="Lamps"><svg class="i"><use href="#bulbs"/></svg></button>
      <i class="sep"></i>
      <button class="t" aria-label="Parts"><svg class="i"><use href="#stack"/></svg></button>
      <button class="d" aria-label="More"><svg><use href="#side"/></svg></button>
    </div>
  </div>
</main>

<div class="bars">
  <div class="bar">
    <button class="t" aria-label="Select figures"><svg class="i"><use href="#gsel"/></svg></button>
    <button class="t on" aria-label="Select"><svg class="i"><use href="#arrow"/></svg></button>
    <i class="sep"></i>
    <button class="t"><svg class="i"><use href="#g123"/></svg><b class="abc low123">123</b></button>
    <button class="t" aria-label="Replace"><svg class="i"><use href="#gmove"/></svg></button>
    <button class="t" aria-label="Remove"><svg class="i"><use href="#gx"/></svg></button>
    <i class="sep"></i>
    <button class="t" aria-label="Rotate"><svg class="i"><use href="#grot"/></svg></button>
    <button class="t" aria-label="Flip horizontally"><svg class="i"><use href="#gfh"/></svg></button>
    <button class="t" aria-label="Flip vertically"><svg class="i"><use href="#gfv"/></svg></button>
    <button class="t" aria-label="Vertices"><svg class="i"><use href="#gtri"/></svg></button>
    <i class="sep"></i>
    <button class="t" aria-label="To front"><svg class="i"><use href="#z1"/></svg></button>
    <button class="t" aria-label="To back"><svg class="i"><use href="#z2"/></svg></button>
    <button class="t" aria-label="Backward"><svg class="i"><use href="#z3"/></svg></button>
    <button class="t" aria-label="Forward"><svg class="i"><use href="#z4"/></svg></button>
    <button class="t" aria-label="Group"><svg class="i"><use href="#grp"/></svg></button>
    <button class="t" aria-label="Ungroup"><svg class="i"><use href="#grp"/></svg></button>
    <button class="t" aria-label="Arrange"><svg class="i"><use href="#dist"/></svg></button>
    <button class="d" aria-label="Arrange options"><svg class="u"><use href="#up4"/></svg></button>
    <button class="t" aria-label="Snap"><svg class="i"><use href="#snap"/></svg></button>
    <button class="d" aria-label="More"><svg><use href="#drop"/></svg></button>
  </div>
  <div class="bar">
    <button class="t" aria-label="Reference"><svg class="i"><use href="#anc"/></svg></button>
    <i class="sep"></i>
    <button class="t" aria-label="Align left"><svg class="i" viewBox="0 0 16 16"><path d="M1.500 0v16M3 3.500h8v8H3z" fill="none" stroke="#888"/><use href="#ptr"/></svg></button>
    <button class="t" aria-label="Align right"><svg class="i" viewBox="0 0 16 16"><path d="M14.500 0v14M4 3.500h8v8H4z" fill="none" stroke="#888"/><use href="#ptr"/></svg></button>
    <button class="t" aria-label="Align top"><svg class="i" viewBox="0 0 16 16"><path d="M0 1.500h16M3 3.500h8v6H3z" fill="none" stroke="#888"/><use href="#ptr"/></svg></button>
    <button class="t" aria-label="Align bottom"><svg class="i" viewBox="0 0 16 16"><path d="M0 9.500h16M3.500 1.500h10v8h-10z" fill="none" stroke="#888"/><use href="#ptr"/></svg></button>
    <button class="t" aria-label="Centre"><svg class="i" viewBox="0 0 16 16"><path d="M6.500 0v14M1.500 2.500h10v8h-10z" fill="none" stroke="#888"/><use href="#ptr"/></svg></button>
    <button class="t" aria-label="Middle"><svg class="i" viewBox="0 0 16 16"><path d="M0 4.500h15M2.500 1.500h10v6h-10z" fill="none" stroke="#888"/><use href="#ptr"/></svg></button>
    <button class="d" aria-label="More"><svg><use href="#drop"/></svg></button>
  </div>
</div>
<div class="bars coords">
  <div class="bar">
    <span class="c p">(</span>
    <span class="spin"><input aria-label="X1" disabled><svg><use href="#spn"/></svg></span><span class="c">,</span>
    <span class="spin"><input aria-label="Y1" disabled><svg><use href="#spn"/></svg></span><span class="c w">)-(</span>
    <span class="spin"><input aria-label="X2" disabled><svg><use href="#spn"/></svg></span><span class="c">,</span>
    <span class="spin"><input aria-label="Y2" disabled><svg><use href="#spn"/></svg></span><span class="c">)</span>
    <span class="spin size"><input aria-label="Width" disabled><svg><use href="#spn"/></svg></span><span class="c">x</span>
    <span class="spin size"><input aria-label="Height" disabled><svg><use href="#spn"/></svg></span>
  </div>
</div>

<footer class="status"><span>Set the operation log.</span><output>VT5-WX15</output><output>KEYENCE KV-X500/X300 (Ethernet)</output><output>252,100</output></footer>
</body>
</html>
```
FILE: styles.css
```css
* { box-sizing: border-box; }
html, body { height: 100%; margin: 0; }
body {
  display: grid;
  grid-template-rows: 23px 25px 27px 26px minmax(0, 1fr) 26px 30px 20px;
  overflow: hidden;
  background: #f0f0f0;
  color: #000;
  font: 12px/16px Lato, "Noto Sans", sans-serif;
}
.defs { position: absolute; width: 0; height: 0; }
button { border: 0; padding: 0; background: none; font: inherit; color: inherit; }
svg { display: block; flex: none; }
ul { list-style: none; margin: 0; padding: 0; }
.i { width: 16px; height: 16px; }
.chev { width: 9px; height: 9px; color: #505050; }

/* title bar */
.title { display: flex; align-items: center; padding-left: 2px; gap: 5px; background: #0078d7; color: #fff; }
.title h1 { margin: 0; flex: 1; font: inherit; }
.app { width: 16px; height: 14px; }
.winbtns { display: flex; }
.winbtns button { width: 46px; display: grid; place-items: center; }
.winbtns svg { width: 12px; height: 12px; }

/* menu bar */
.menubar { display: flex; align-items: stretch; gap: 1px; position: relative; padding-left: 9px; border-top: 1px solid #fff; border-bottom: 1px solid #a0a0a0; }
.menubar::before { content: ""; position: absolute; left: 3px; top: 3px; width: 3px; height: 18px; border: 1px solid #fff; border-right-color: #a0a0a0; border-bottom-color: #a0a0a0; }
.menubar > button { padding: 0 8px; height: 23px; white-space: nowrap; }
.menuhost { position: relative; }
.menuhost > .open { height: 23px; border: 1px solid #a0a0a0; border-right-color: #fff; border-bottom: 0; padding: 0 8px; }
.marked { outline: 3px solid #f00; outline-offset: 1px; }

.popup { position: absolute; z-index: 10; background: #f0f0f0; border: 1px solid #fff; border-right: 2px solid #696969; border-bottom: 2px solid #696969; box-shadow: 3px 3px 4px rgba(0, 0, 0, .5); }
.main { left: 0; top: 23px; width: 247px; z-index: 5; margin-left: -1px; padding: 1px 2px; }
.sub { left: 242px; top: 1px; width: 210px; padding: 1px; color: #000; }
.popup li { position: relative; }
.popup li > button { display: flex; align-items: center; width: 100%; height: 21px; padding-left: 25px; white-space: nowrap; text-align: left; }
.popup button > .i { margin: 0 8px 0 -24px; }
.popup kbd { margin-left: auto; margin-right: 19px; font: inherit; }
.popup .rule { height: 8px; margin: 0 10px; padding-top: 2px; }
.popup .rule::before { content: ""; display: block; height: 2px; background: #a0a0a0; border-bottom: 1px solid #fff; }
.popup .active > button { background: #0078d7; color: #fff; box-shadow: 0 0 0 1px #0078d7; }
.popup .active { z-index: 2; }
.more { width: 8px; height: 8px; margin: 0 7px 0 auto; }

/* horizontal toolbars */
.bars { display: flex; }
.bar { display: flex; align-items: flex-start; position: relative; padding: 1px 1px 0 8px; border: 1px solid #fff; border-right: 1px solid #a0a0a0; border-bottom: 1px solid #a0a0a0; border-left: 0; }
.bar::before { content: ""; position: absolute; left: 3px; top: 2px; bottom: 2px; width: 3px; border: 1px solid #fff; border-right-color: #a0a0a0; border-bottom-color: #a0a0a0; }
.t { position: relative; flex: none; width: 22px; height: 22px; display: grid; place-items: center; }
.t.on { border: 1px solid #a0a0a0; border-right-color: #fff; border-bottom-color: #fff; background: #f8f8f8; }
.d { flex: none; width: 11px; height: 22px; display: grid; place-items: center; }
.d svg { width: 8px; height: 16px; }
.d .u { height: 8px; }
.sep { flex: none; width: 6px; height: 22px; border-right: 3px solid transparent; border-left: 2px solid transparent; background: #a0a0a0; background-clip: padding-box; }
.tag { position: absolute; right: 1px; top: 0; font: bold 9px/10px "Liberation Sans", sans-serif; color: #d33; }
.abc { position: absolute; top: 8px; font: 7px/8px "DejaVu Sans Mono", monospace; color: #333; }
.low123 { top: 12px; color: #777; }
.combo { display: flex; align-items: center; background: #fff; border: 1px solid #7a7a7a; height: 20px; margin-top: 1px; position: relative; }
.combo select { appearance: none; border: 0; background: none; width: 100%; height: 100%; padding: 0 4px; font: 10px/16px "Liberation Mono", monospace; color: #000; }
.combo .chev { position: absolute; right: 5px; }
.combo.page { width: 160px; margin: 0 0 0 auto; background: #e8e8e8; border-color: #bbb; height: 22px; }
.combo.zoom { width: 60px; }
.first { width: 692px; }
.second { width: 627px; }
.gap { flex: 1; }

/* work area */
.work { display: grid; grid-template-columns: 240px minmax(0, 1fr) 26px 26px; min-height: 0; }
.side { display: flex; flex-direction: column; min-height: 0; }
.side h2 { margin: 2px 0 0; height: 20px; padding: 2px 4px; background: #bfcddb; font: inherit; }
.tree { flex: 1; min-height: 0; margin-top: 1px; padding: 1px 0; background: #fff; border: 1px solid #828790; overflow: hidden; font: 11px/16px "Liberation Sans", Arial, sans-serif; }
.tree li { display: flex; align-items: center; height: 16px; padding-left: 8px; white-space: nowrap; }
.tree .sel { background: #f0f0f0; }
.tree span { margin-left: 5px; }
.tree .i { margin-left: 6px; }
.tree .l2 { padding-left: 27px; }
.tree .l2b { padding-left: 36px; }
.tree .l3 { padding-left: 55px; }
.pm { width: 9px; height: 9px; border: 1px solid #919191; border-radius: 1px; background: linear-gradient(#3c5a9c, #3c5a9c) center / 5px 1px no-repeat, #fff; }
.pm.plus { background: linear-gradient(#3c5a9c, #3c5a9c) center / 5px 1px no-repeat, linear-gradient(#3c5a9c, #3c5a9c) center / 1px 5px no-repeat, #fff; }
.treebar { display: flex; padding: 2px; height: 25px; }
.tabs { display: flex; height: 23px; border-top: 1px solid #696969; }
.tabs button { display: flex; align-items: center; gap: 3px; padding: 0 3px; height: 20px; border: 1px solid #696969; border-top: 0; border-right-width: 2px; border-bottom-width: 2px; white-space: nowrap; }
.tabs .cur { height: 22px; margin-top: -1px; margin-left: 2px; background: #f0f0f0; border-left: 0; border-right: 0; padding-right: 5px; }

.canvas { display: grid; grid-template-columns: minmax(0, 1fr) 18px; grid-template-rows: minmax(0, 1fr) 18px; margin: 1px 0 0 5px; border: 1px solid #696969; border-right: 1px solid #e3e3e3; border-bottom: 1px solid #e3e3e3; min-height: 0; }
.view { overflow: hidden; padding: 32px 0 0 67px; display: flex; flex-direction: column; background: repeating-conic-gradient(#203566 0 25%, #344868 0 50%) 0 0 / 4px 4px; }
.screen { position: relative; flex: none; width: 1024px; height: 768px; background: #000; }
.hatch { flex: 1; width: 1024px; background: linear-gradient(135deg, #b0b0b3 25%, #98989b 25% 50%, #b0b0b3 50% 75%, #98989b 75%) 0 0 / 10px 10px; }
.cross { position: absolute; width: 34px; height: 34px; left: calc(50% - 17px); top: calc(50% - 17px); }
.slide { position: absolute; left: 0; bottom: 0; width: 92px; height: 32px; border-radius: 8px 8px 0 0; background: #d3dcd3; font: bold 10px/32px "DejaVu Sans Mono", monospace; text-align: center; }
.hand { position: absolute; right: 100%; bottom: 0; width: 32px; height: 32px; }
.vs { display: flex; flex-direction: column; align-items: center; padding: 4px 0 4px; border-left: 1px solid #fff; }
.vs .thumb { flex: none; width: 15px; height: 332px; margin: 244px 0 auto; background: #cdcdcd; }
.hs { display: flex; align-items: center; padding: 0 4px 2px; border-top: 1px solid #fff; }
.hs .thumb { flex: 1; height: 15px; margin: 0 5px 0 345px; background: #cdcdcd; }
.flip { transform: rotate(180deg); }
.lt { transform: rotate(90deg); }
.rt { transform: rotate(-90deg); }

/* vertical toolbars */
.rail { border-left: 1px solid #a0a0a0; }
.vbar { position: relative; display: flex; flex-direction: column; align-items: center; padding: 9px 0 1px; border: 1px solid #fff; border-bottom: 1px solid #a0a0a0; border-right: 0; }
.vbar::before { content: ""; position: absolute; top: 2px; left: 2px; right: 2px; height: 3px; border: 1px solid #fff; border-right-color: #a0a0a0; border-bottom-color: #a0a0a0; }
.vbar .sep { width: 22px; height: 6px; border: 0 solid transparent; border-top-width: 2px; border-bottom-width: 3px; }
.vbar .d { height: 10px; width: 22px; padding-right: 2px; justify-items: end; }
.vbar .d svg { height: 8px; }
.biga { font: bold 18px/22px "Liberation Sans", sans-serif; color: #444; }
.dxf { font: 10px/22px "Open Sans", sans-serif; color: #444; }
.green { color: #8de82e; }
.red { color: #f33; }

/* coordinate bar */
.coords .bar { align-items: center; padding: 0 16px 0 8px; font: 11px/16px "Liberation Mono", monospace; }
.c { width: 17px; text-align: center; }
.c.p { width: 12px; text-align: left; }
.c.w { width: 30px; }
.spin { display: flex; width: 51px; height: 21px; border: 1px solid #ccc; padding: 1px; background: #f0f0f0; }
.spin.size { width: 48px; }
.spin input { flex: 1; min-width: 0; border: 0; padding: 0; background: none; }
.spin svg { width: 16px; height: 17px; }

/* status bar */
.status { display: flex; align-items: stretch; gap: 3px; padding: 2px 0 0 3px; line-height: 17px; white-space: nowrap; }
.status span { flex: 1; }
.status output { padding: 0 4px 0 3px; border: 1px solid #a0a0a0; border-bottom: 0; border-right-color: #fff; font: 11px/16px "Noto Sans CJK JP", "Open Sans", sans-serif; }
```
